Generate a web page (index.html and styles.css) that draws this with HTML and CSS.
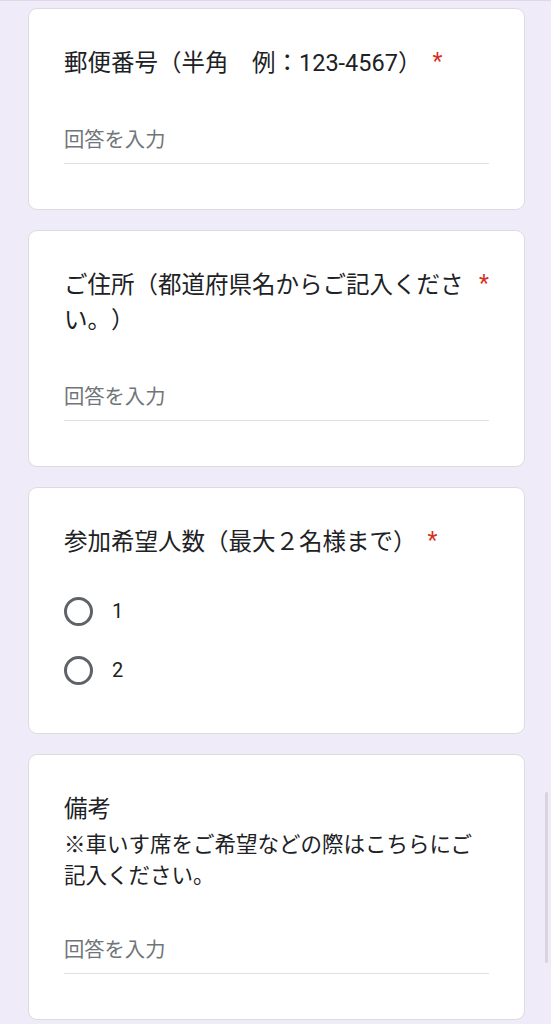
FILE: index.html
```html
<!DOCTYPE html>
<html lang="ja">
<head>
<meta charset="utf-8">
<title>フォーム</title>
<link rel="stylesheet" href="styles.css">
</head>
<body>
<main class="form">
  <section class="card">
    <div class="q-head">
      <div class="q-title">郵便番号（半角　例：123-4567）</div>
      <span class="req">*</span>
    </div>
    <div class="answer"><span class="placeholder">回答を入力</span></div>
  </section>

  <section class="card">
    <div class="q-head">
      <div class="q-title">ご住所（都道府県名からご記入ください。）</div>
      <span class="req">*</span>
    </div>
    <div class="answer"><span class="placeholder">回答を入力</span></div>
  </section>

  <section class="card">
    <div class="q-head">
      <div class="q-title">参加希望人数（最大２名様まで）</div>
      <span class="req">*</span>
    </div>
    <div class="options">
      <label class="option"><span class="radio"></span><span class="opt-label">1</span></label>
      <label class="option"><span class="radio"></span><span class="opt-label">2</span></label>
    </div>
  </section>

  <section class="card">
    <div class="q-head">
      <div class="q-title">備考</div>
    </div>
    <div class="q-desc">※車いす席をご希望などの際はこちらにご記入ください。</div>
    <div class="answer answer-desc"><span class="placeholder">回答を入力</span></div>
  </section>
</main>
<div class="scrollbar"></div>
</body>
</html>
```

FILE: styles.css
```css
html, body {
  margin: 0;
  padding: 0;
}
body {
  background: #f0ebf8;
  border-top: 1px solid #dcd8e6;
  font-family: Roboto, "Noto Sans CJK JP", sans-serif;
  color: #202124;
  height: 1023px;
  overflow: hidden;
}
.form {
  display: flex;
  flex-direction: column;
  gap: 20px;
  padding: 7px 26px 0 28px;
}
.card {
  background: #ffffff;
  border: 1px solid #dadce0;
  border-radius: 9px;
  padding: 37px 35px 45px 35px;
}
.q-head {
  display: flex;
  align-items: flex-start;
}
.q-title {
  font-size: 23.5px;
  line-height: 35px;
  min-width: 0;
  text-spacing-trim: space-all;
}
.req {
  flex: none;
  color: #d93025;
  font-size: 23px;
  line-height: 35px;
  margin-left: 11px;
  margin-top: -2px;
}
.q-desc {
  font-size: 21.5px;
  line-height: 31px;
  margin-top: 2px;
  margin-right: 10px;
  text-spacing-trim: space-all;
}
.answer {
  margin-top: 44px;
  padding-bottom: 6px;
  border-bottom: 1px solid #e0e0e3;
  line-height: 30px;
}
.answer-desc {
  margin-top: 44px;
}
.placeholder {
  font-size: 20.3px;
  color: #70757a;
}
.options {
  display: flex;
  flex-direction: column;
  gap: 25px;
  margin-top: 34px;
  padding-bottom: 1px;
}
.option {
  display: flex;
  align-items: center;
  height: 34px;
}
.radio {
  box-sizing: border-box;
  width: 29px;
  height: 29px;
  border: 3px solid #5f6368;
  border-radius: 50%;
}
.opt-label {
  font-size: 20px;
  margin-left: 19px;
}
.scrollbar {
  position: absolute;
  left: 545px;
  top: 792px;
  width: 3px;
  height: 171px;
  background: #d7d3df;
  border-radius: 2px;
}
```
